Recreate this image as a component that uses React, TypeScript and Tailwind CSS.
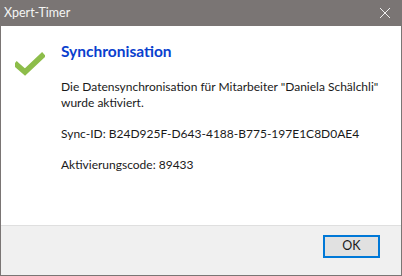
import React from 'react'

function CheckIcon() {
  return (
    <svg width="30" height="24" viewBox="0 0 30 24" className="block">
      <path d="M2 13 L10 20 L27 4" fill="none" stroke="#8dbd4a" strokeWidth="5.5" strokeLinecap="square" strokeLinejoin="miter" />
    </svg>
  )
}

export default function App() {
  return (
    <div className="w-[402px] h-[276px] flex flex-col bg-white border border-t-0 border-[#7a7574] overflow-hidden" style={{ fontFamily: 'Lato, "Noto Sans", sans-serif' }}>
      <div className="h-[26px] bg-[#7a7574] flex items-center justify-between pl-[3px] shrink-0">
        <span className="text-[12.5px] text-[#f5f5f5] leading-none">Xpert-Timer</span>
        <svg width="12" height="12" viewBox="0 0 12 12" className="mr-[10px]">
          <path d="M1 1 L11 11 M11 1 L1 11" stroke="#f0f0f0" strokeWidth="1" fill="none" />
        </svg>
      </div>
      <div className="flex-1 flex pl-[14px] pt-[15px]">
        <div className="w-[46px] pt-[11px]">
          <CheckIcon />
        </div>
        <div className="flex flex-col text-[12px] text-[#1a1a1a] leading-[16px]">
          <div className="text-[15.5px] font-bold text-[#0a3fce] leading-[20px]">Synchronisation</div>
          <div className="mt-[18px]">Die Datensynchronisation für Mitarbeiter "Daniela Schälchli"</div>
          <div>wurde aktiviert.</div>
          <div className="mt-[15px]">Sync-ID: B24D925F-D643-4188-B775-197E1C8D0AE4</div>
          <div className="mt-[15px]">Aktivierungscode: 89433</div>
        </div>
      </div>
      <div className="h-[50px] shrink-0 bg-[#f0f0f0] border-t border-[#dfdfdf] flex items-start justify-end pr-[21px] pt-[9px]">
        <button className="w-[57px] h-[23px] bg-[#e1e1e1] border-2 border-[#0078d7] text-[12.5px] text-[#1a1a1a] leading-none">OK</button>
      </div>
    </div>
  )
}
